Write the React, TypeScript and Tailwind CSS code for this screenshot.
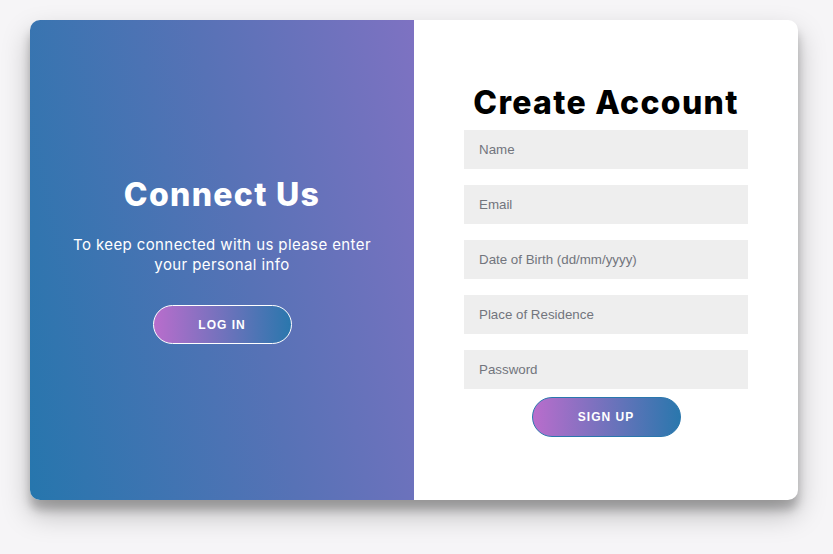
import { useState } from "react";

const FIELDS = [
  { name: "name", placeholder: "Name", type: "text" },
  { name: "email", placeholder: "Email", type: "email" },
  { name: "dob", placeholder: "Date of Birth (dd/mm/yyyy)", type: "text" },
  { name: "residence", placeholder: "Place of Residence", type: "text" },
  { name: "password", placeholder: "Password", type: "password" },
];

export default function App() {
  const [values, setValues] = useState<Record<string, string>>({});

  return (
    <div className="min-h-[554px] bg-[#f6f5f7] pt-5 pl-[30px] font-['Liberation_Sans',Arial,sans-serif]">
      <div className="flex w-[768px] h-[480px] rounded-[10px] overflow-hidden bg-white shadow-[0_14px_28px_rgba(0,0,0,0.25),0_10px_10px_rgba(0,0,0,0.22)]">
        {/* overlay panel */}
        <div className="w-[384px] flex flex-col items-center justify-center px-10 text-center text-white bg-[linear-gradient(78deg,#2676ad_0%,#5772b6_55%,#7e72c2_100%)]">
          <h1 className="font-['Inter',sans-serif] font-extrabold text-[32px] leading-[38px] tracking-[1.3px]">Connect Us</h1>
          <p className="mt-[21px] mb-[30px] font-['Inter',sans-serif] text-[15px] leading-[20px] tracking-[0.4px] font-normal">
            To keep connected with us please enter your personal info
          </p>
          <button className="w-[139px] h-[39px] rounded-[20px] border border-white text-white text-[12px] font-bold tracking-[1px] bg-[linear-gradient(to_right,#b96dcc,#2a77ad)]">
            LOG IN
          </button>
        </div>

        {/* sign up form */}
        <form
          className="flex-1 flex flex-col items-center justify-center px-[50px]"
          onSubmit={(e) => e.preventDefault()}
        >
          <h1 className="font-['Inter',sans-serif] font-extrabold text-[32px] leading-[38px] tracking-[1.3px] text-black">Create Account</h1>
          {FIELDS.map((f) => (
            <input
              key={f.name}
              type={f.type}
              placeholder={f.placeholder}
              value={values[f.name] || ""}
              onChange={(e) => setValues((v) => ({ ...v, [f.name]: e.target.value }))}
              className="mt-2 mb-2 w-[284px] h-[39px] bg-[#eeeeee] px-[15px] text-[13.33px] text-black placeholder:text-[#72757d] outline-none font-['Liberation_Sans',Arial,sans-serif]"
            />
          ))}
          <button className="w-[149px] h-[40px] rounded-[20px] border border-[#2a77ad] text-white text-[12px] font-bold tracking-[1px] bg-[linear-gradient(to_right,#b96dcc,#2a77ad)]">
            SIGN UP
          </button>
        </form>
      </div>
    </div>
  );
}
